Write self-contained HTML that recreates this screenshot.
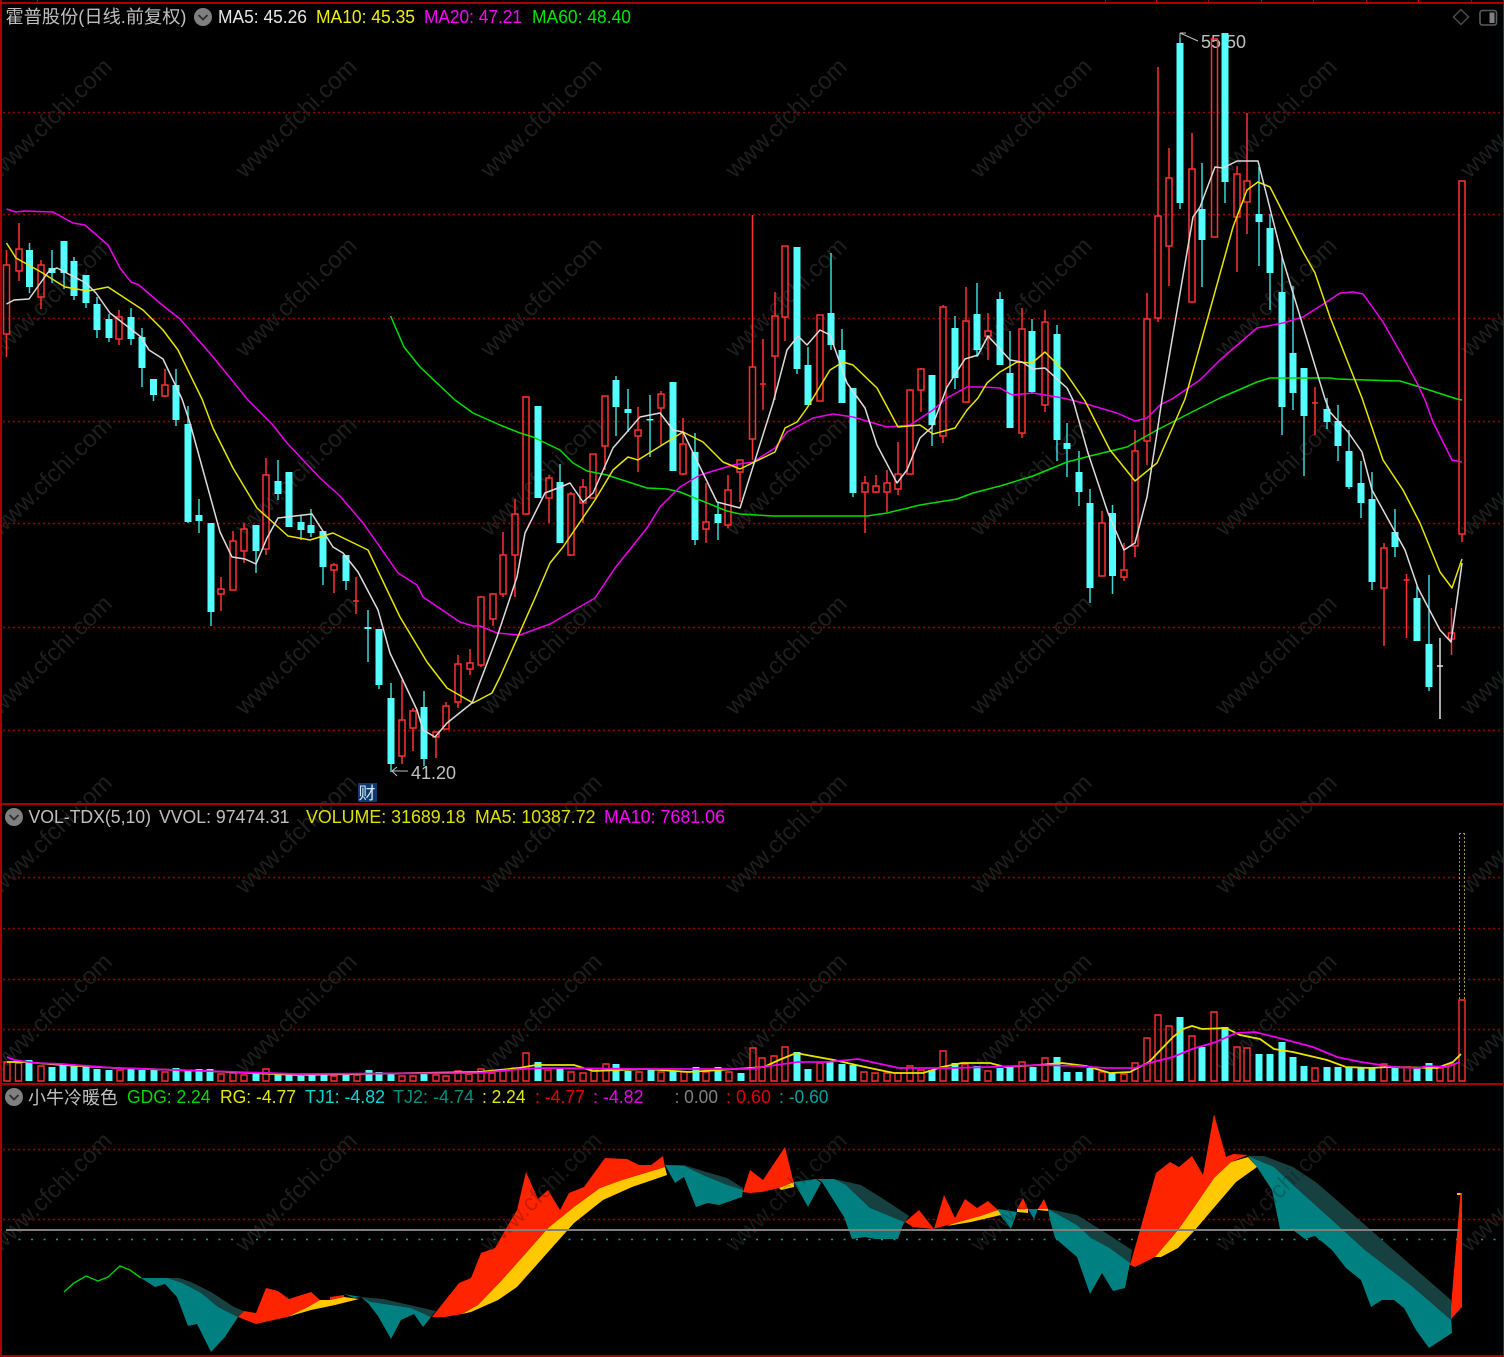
<!DOCTYPE html>
<html><head><meta charset="utf-8"><title>霍普股份</title>
<style>
html,body{margin:0;padding:0;background:#000;width:1504px;height:1357px;overflow:hidden}
svg{display:block}
text{font-family:"Liberation Sans","Noto Sans CJK SC",sans-serif;font-size:18.500px}
.wm text{font-size:24px;text-anchor:middle}
</style></head><body>
<svg width="1504" height="1357" viewBox="0 0 1504 1357" xmlns="http://www.w3.org/2000/svg">
<rect width="1504" height="1357" fill="#000"/>
<!-- grid -->
<g stroke="#960000" stroke-width="1.500" stroke-dasharray="2 3" fill="none">
<path d="M3 112.500H1503M3 214.500H1503M3 318.500H1503M3 421.500H1503M3 523.500H1503M3 627.500H1503M3 730.500H1503"/>
<path d="M3 877.500H1503M3 928.500H1503M3 979.500H1503M3 1029.500H1503"/>
<path d="M3 1149.500H1503M3 1219.500H1503"/>
</g>
<path d="M6 1239.500H1503" stroke="#00a0a0" stroke-width="1.500" stroke-dasharray="2 10.500" fill="none"/>
<!-- watermark -->
<g class="wm" fill="#1e1e1e">
<text x="51" y="126" transform="rotate(-44.300 51 118)">www.cfchi.com</text><text x="296" y="126" transform="rotate(-44.300 296 118)">www.cfchi.com</text><text x="541" y="126" transform="rotate(-44.300 541 118)">www.cfchi.com</text><text x="786" y="126" transform="rotate(-44.300 786 118)">www.cfchi.com</text><text x="1031" y="126" transform="rotate(-44.300 1031 118)">www.cfchi.com</text><text x="1276" y="126" transform="rotate(-44.300 1276 118)">www.cfchi.com</text><text x="1521" y="126" transform="rotate(-44.300 1521 118)">www.cfchi.com</text>
<text x="51" y="305" transform="rotate(-44.300 51 297)">www.cfchi.com</text><text x="296" y="305" transform="rotate(-44.300 296 297)">www.cfchi.com</text><text x="541" y="305" transform="rotate(-44.300 541 297)">www.cfchi.com</text><text x="786" y="305" transform="rotate(-44.300 786 297)">www.cfchi.com</text><text x="1031" y="305" transform="rotate(-44.300 1031 297)">www.cfchi.com</text><text x="1276" y="305" transform="rotate(-44.300 1276 297)">www.cfchi.com</text><text x="1521" y="305" transform="rotate(-44.300 1521 297)">www.cfchi.com</text>
<text x="51" y="484" transform="rotate(-44.300 51 476)">www.cfchi.com</text><text x="296" y="484" transform="rotate(-44.300 296 476)">www.cfchi.com</text><text x="541" y="484" transform="rotate(-44.300 541 476)">www.cfchi.com</text><text x="786" y="484" transform="rotate(-44.300 786 476)">www.cfchi.com</text><text x="1031" y="484" transform="rotate(-44.300 1031 476)">www.cfchi.com</text><text x="1276" y="484" transform="rotate(-44.300 1276 476)">www.cfchi.com</text><text x="1521" y="484" transform="rotate(-44.300 1521 476)">www.cfchi.com</text>
<text x="51" y="663" transform="rotate(-44.300 51 655)">www.cfchi.com</text><text x="296" y="663" transform="rotate(-44.300 296 655)">www.cfchi.com</text><text x="541" y="663" transform="rotate(-44.300 541 655)">www.cfchi.com</text><text x="786" y="663" transform="rotate(-44.300 786 655)">www.cfchi.com</text><text x="1031" y="663" transform="rotate(-44.300 1031 655)">www.cfchi.com</text><text x="1276" y="663" transform="rotate(-44.300 1276 655)">www.cfchi.com</text><text x="1521" y="663" transform="rotate(-44.300 1521 655)">www.cfchi.com</text>
<text x="51" y="842" transform="rotate(-44.300 51 834)">www.cfchi.com</text><text x="296" y="842" transform="rotate(-44.300 296 834)">www.cfchi.com</text><text x="541" y="842" transform="rotate(-44.300 541 834)">www.cfchi.com</text><text x="786" y="842" transform="rotate(-44.300 786 834)">www.cfchi.com</text><text x="1031" y="842" transform="rotate(-44.300 1031 834)">www.cfchi.com</text><text x="1276" y="842" transform="rotate(-44.300 1276 834)">www.cfchi.com</text><text x="1521" y="842" transform="rotate(-44.300 1521 834)">www.cfchi.com</text>
<text x="51" y="1021" transform="rotate(-44.300 51 1013)">www.cfchi.com</text><text x="296" y="1021" transform="rotate(-44.300 296 1013)">www.cfchi.com</text><text x="541" y="1021" transform="rotate(-44.300 541 1013)">www.cfchi.com</text><text x="786" y="1021" transform="rotate(-44.300 786 1013)">www.cfchi.com</text><text x="1031" y="1021" transform="rotate(-44.300 1031 1013)">www.cfchi.com</text><text x="1276" y="1021" transform="rotate(-44.300 1276 1013)">www.cfchi.com</text><text x="1521" y="1021" transform="rotate(-44.300 1521 1013)">www.cfchi.com</text>
<text x="51" y="1200" transform="rotate(-44.300 51 1192)">www.cfchi.com</text><text x="296" y="1200" transform="rotate(-44.300 296 1192)">www.cfchi.com</text><text x="541" y="1200" transform="rotate(-44.300 541 1192)">www.cfchi.com</text><text x="786" y="1200" transform="rotate(-44.300 786 1192)">www.cfchi.com</text><text x="1031" y="1200" transform="rotate(-44.300 1031 1192)">www.cfchi.com</text><text x="1276" y="1200" transform="rotate(-44.300 1276 1192)">www.cfchi.com</text><text x="1521" y="1200" transform="rotate(-44.300 1521 1192)">www.cfchi.com</text>
</g>
<!-- high / low labels (below candles) -->
<text x="1201" y="48" textLength="45" lengthAdjust="spacingAndGlyphs" fill="#c0c0c0">55.50</text>
<path d="M1180 33L1198 41M1180 33h6M1180 33v8" stroke="#c0c0c0" fill="none"/>
<text x="411" y="779" textLength="45" lengthAdjust="spacingAndGlyphs" fill="#c0c0c0">41.20</text>
<path d="M392 771H408M392 771l5-4M392 771l5 5" stroke="#c0c0c0" fill="none"/>
<!-- cyan wicks -->
<path fill="none" stroke="#38d8d8" stroke-width="1.500" d="M29.500 243V293M52 250V283M64 241V289M74 257V300M86 275V308M97 297V338M109 314V342M131 308V345M142 328V387M153.500 379V401M176 369V426M188 406V523M199 499V533M211 523V626M256 525V573M278 460V500M289 472V527M301 515V540M311 509V537M323 531V585M346 555V590M368 610V662M379 629V689M391 683V772M424 691V766M538 406V498M560 464V543M616 376V436M628 389V432M650 395V457M673 382V471M695 433V545M718 502V540M797 247V374M808 347V405M831 253V350M842 329V403M853 388V497M932 375V446M955 316V389M977 283V357M1000 292V365M1010 331V428M1032 319V394M1057 325V461M1067 423V477M1079 451V506M1090 489V603M1112.500 505V594M1180 38V209M1202 163V287M1225 33V203M1259 167V266M1270 214V310M1282 257V435M1293 286V410M1304 368V476M1327 398V429M1338 405V461M1349 430V489M1361 461V518M1372 472V590M1395 509V557M1417 586V641M1429 575V691"/>
<!-- cyan bodies -->
<path fill="#54ffff" d="M26 250h7v37h-7zM48.500 268h7v5h-7zM60.500 241h7v32h-7zM70.500 261h7v35h-7zM82.500 275h7v28h-7zM93.500 304h7v26h-7zM105.500 319h7v19h-7zM127.500 317h7v22h-7zM138.500 337h7v31h-7zM150 379h7v16h-7zM172.500 385h7v35h-7zM184.500 424h7v98h-7zM195.500 515h7v6h-7zM207.500 523h7v89h-7zM252.500 525h7v26h-7zM274.500 481h7v13h-7zM285.500 472h7v55h-7zM297.500 522h7v8h-7zM307.500 525h7v8h-7zM319.500 531h7v36h-7zM342.500 555h7v26h-7zM364.500 627h7v2h-7zM375.500 629h7v56h-7zM387.500 698h7v66h-7zM420.500 707h7v52h-7zM534.500 406h7v92h-7zM556.500 482h7v61h-7zM612.500 380h7v27h-7zM624.500 409h7v4h-7zM646.500 419h7v1.500h-7zM669.500 382h7v89h-7zM691.500 452h7v88h-7zM714.500 514h7v9h-7zM793.500 247h7v122h-7zM804.500 365h7v40h-7zM827.500 313h7v32h-7zM838.500 350h7v53h-7zM849.500 388h7v105h-7zM928.500 375h7v50h-7zM951.500 328h7v50h-7zM973.500 314h7v36h-7zM996.500 299h7v66h-7zM1006.500 373h7v55h-7zM1028.500 331h7v61h-7zM1053.500 334h7v106h-7zM1063.500 443h7v6h-7zM1075.500 472h7v20h-7zM1086.500 503h7v85h-7zM1109 513h7v63h-7zM1176.500 43h7v160h-7zM1198.500 209h7v31h-7zM1221.500 33h7v149h-7zM1255.500 214h7v8h-7zM1266.500 228h7v45h-7zM1278.500 292h7v115h-7zM1289.500 353h7v40h-7zM1300.500 368h7v48h-7zM1323.500 409h7v13h-7zM1334.500 421h7v25h-7zM1345.500 451h7v36h-7zM1357.500 483h7v20h-7zM1368.500 499h7v83h-7zM1391.500 532h7v15h-7zM1413.500 598h7v43h-7zM1425.500 644h7v43h-7z"/>
<!-- red candles -->
<path fill="none" stroke="#ff3030" stroke-width="1.500" d="M6.500 250V265M6.500 334V357M3.500 265h6v69h-6zM19 223V249M19 271V281M16 249h6v22h-6zM41 260V265M41 297V309M38 265h6v32h-6zM119 310V317M119 339V345M116 317h6v22h-6zM165 369V385M165 396V397M162 385h6v11h-6zM221 577V589M221 594V611M218 589h6v5h-6zM233 531V541M230 541h6v49h-6zM244 523V529M244 551V563M241 529h6v22h-6zM266 458V475M266 549V555M263 475h6v74h-6zM334 563V565M334 570V593M331 565h6v5h-6zM356 577V614M353 601h6M402 680V720M402 756V764M399 720h6v36h-6zM413 708V711M413 728V751M410 711h6v17h-6zM436 737V758M433 732h6v5h-6zM446 702V706M443 706h6v23h-6zM458 655V664M458 702V708M455 664h6v38h-6zM470 649V663M470 669V675M467 663h6v6h-6zM481 596V597M481 665V667M478 597h6v68h-6zM493 593V594M493 619V626M490 594h6v25h-6zM503 532V555M503 594V597M500 555h6v39h-6zM515 499V514M515 555V597M512 514h6v41h-6zM526 396V397M523 397h6v117h-6zM549 475V478M549 498V523M546 478h6v20h-6zM571 492V494M571 555V556M568 494h6v61h-6zM583 479V487M583 503V523M580 487h6v16h-6zM590 454h6v44h-6zM602 396h6v50h-6zM605 446V470M638 407V430M638 436V472M635 430h6v6h-6zM661 391V394M661 408V445M658 394h6v14h-6zM683 418V444M683 474V475M680 444h6v30h-6zM706 483V522M706 529V543M703 522h6v7h-6zM728 475V490M728 525V528M725 490h6v35h-6zM737 460h6v12h-6zM740 472V502M752.500 215V367M752.500 439V460M749.500 367h6v72h-6zM763 339V410M760 384h6M775 292V316M775 356V400M772 316h6v40h-6zM782 246h6v71h-6zM785 317V341M817 315h6v86h-6zM865 476V483M865 492V533M862 483h6v9h-6zM876 475V486M876 492V493M873 486h6v6h-6zM887 470V483M887 492V512M884 483h6v9h-6zM898 442V474M898 489V495M895 474h6v15h-6zM907 390h6v84h-6zM921 368V369M921 390V412M918 369h6v21h-6zM943 305V307M943 436V443M940 307h6v129h-6zM966 287V321M963 321h6v81h-6zM988 313V331M988 336V360M985 331h6v5h-6zM1022 308V329M1022 433V438M1019 329h6v104h-6zM1045 310V322M1045 405V412M1042 322h6v83h-6zM1102 511V523M1099 523h6v53h-6zM1124 543V570M1124 577V581M1121 570h6v7h-6zM1135 430V451M1135 546V557M1132 451h6v95h-6zM1147 293V319M1147 441V465M1144 319h6v122h-6zM1158 67V216M1158 318V322M1155 216h6v102h-6zM1169 148V178M1169 246V286M1166 178h6v68h-6zM1189 169h6v133h-6zM1192 133V169M1211.500 39h6v198h-6zM1237 166V174M1237 217V272M1234 174h6v43h-6zM1247 113V181M1247 202V234M1244 181h6v21h-6zM1315 387V435M1312 403h6M1384 543V548M1384 588V646M1381 548h6v40h-6zM1406.500 574V638M1403.500 580h6M1451.500 608V633M1451.500 639V655M1448.500 633h6v6h-6zM1459 181h6v353h-6zM1462 534V542"/>
<path d="M1440 638V719M1437 666h6" stroke="#e0e0e0" stroke-width="1.500" fill="none"/>
<!-- MA lines -->
<g fill="none" stroke-width="1.500" stroke-linejoin="round">
<polyline stroke="#00e000" points="390.600,316 404,347 420,367 455,400 473,413 500,425 520,433 533,437 560,450 573,463 587,471 607,475 647,488 667,489 680,492 727,511 740,514 773,516 817,516 867,516 887,513 920,505 957,499 973,493 1000,486 1033,476 1067,462 1090,456 1127,447 1157,430 1190,413 1220,398 1257,382 1270,378 1330,378 1337,379 1367,380 1400,381 1420,387 1457,399 1462,400"/>
<polyline stroke="#ee00ee" points="6.500,209 16,212 24.500,211 53,212 73,223 85,225 108,245 120,268 131,282 139,285 161,304 180,319 214,358 248,400 272,424 287,443 320,478 340,496 363,523 380,547 398,573 417,585 423,597 460,622 473,626 480,626 497,633 520,635 550,624 595,598 615,568 647,528 660,507 680,487 700,475 733,465 753,462 775,448 787,432 813,418 833,414 853,417 887,427 910,425 933,410 947,398 967,387 983,387 1000,388 1012,395 1033,393 1063,398 1083,403 1117,413 1135,421 1147,418 1160,405 1172,399 1200,380 1220,360 1257,328 1283,323 1303,317 1325,303 1340,293 1353,292 1363,294 1383,322 1403,357 1417,383 1425,400 1433,422 1452,460 1462,462"/>
<polyline stroke="#e6e600" points="6.500,243 16,258 41,272 65,287 88,291 108,287 143,310 163,330 178,350 202,399 213,428 233,468 257,508 288,536 310,540 333,533 368,550 400,617 427,662 447,688 473,703 492,693 500,677 535,598 550,563 563,547 595,500 613,470 628,457 638,460 683,432 703,442 723,462 740,469 775,452 785,428 797,422 807,408 830,370 843,362 853,365 877,388 898,427 920,425 933,434 955,428 967,410 978,398 987,383 1000,372 1017,362 1032,363 1045,352 1065,372 1085,401 1110,450 1135,481 1157,463 1185,399 1208,317 1233,227 1247,190 1258,182 1270,187 1302,250 1315,273 1330,317 1362,398 1383,460 1403,490 1420,523 1440,572 1452,588 1462,559"/>
<polyline stroke="#dcdcdc" points="6.500,304 14,300 29,299 49,271 57,268 86,283 96,293 110,313 141,337 149,350 163,359 182,399 190,423 220,532 232,557 245,559 256,564 267,538 278,518 312,514 333,547 343,553 358,572 378,610 390,653 417,710 423,730 435,737 447,723 472,703 497,637 510,598 517,577 525,533 545,493 563,486 570,483 583,502 593,493 613,448 640,417 660,413 673,430 683,432 700,467 717,502 740,508 773,403 787,350 798,336 807,345 820,330 830,335 847,383 865,408 877,445 897,483 907,470 920,438 932,427 947,387 965,359 978,355 988,336 1000,349 1010,360 1022,362 1033,369 1045,368 1067,388 1073,400 1088,453 1108,513 1124,550 1135,543 1147,497 1157,433 1162,399 1193,217 1200,207 1215,167 1223,168 1237,161 1258,161 1283,260 1293,293 1325,399 1330,412 1348,432 1362,452 1372,490 1405,550 1418,588 1440,630 1451,642 1457,600 1462,563"/>
</g>
<!-- 财 badge -->
<rect x="358" y="783" width="19" height="19" fill="#0c3a6c"/>
<text x="358.500" y="799" style="font-size:17px" fill="#d8e8f8">财</text>
<!-- volume bars -->
<path fill="none" stroke="#ff3030" stroke-width="1.400" d="M4 1062h6V1081h-6zM15.500 1063h6V1081h-6zM38 1066h6V1081h-6zM117 1070h6V1081h-6zM162 1072h6V1081h-6zM218 1074h6V1081h-6zM230 1073h6V1081h-6zM241 1075h6V1081h-6zM263 1069h6V1081h-6zM331 1076h6V1081h-6zM354 1075h6V1081h-6zM399 1076h6V1081h-6zM410 1076h6V1081h-6zM433 1075h6V1081h-6zM443 1076h6V1081h-6zM455 1071h6V1081h-6zM466 1074h6V1081h-6zM478 1069h6V1081h-6zM489 1073h6V1081h-6zM500 1071h6V1081h-6zM512 1068h6V1081h-6zM523 1053h6V1081h-6zM545 1070h6V1081h-6zM568 1072h6V1081h-6zM580 1073h6V1081h-6zM591 1069h6V1081h-6zM603 1064h6V1081h-6zM636 1072h6V1081h-6zM658 1072h6V1081h-6zM681 1072h6V1081h-6zM703 1072h6V1081h-6zM726 1072h6V1081h-6zM750 1048h6V1081h-6zM759 1058h6V1081h-6zM771 1056h6V1081h-6zM782 1047h6V1081h-6zM817 1063h6V1081h-6zM861 1072h6V1081h-6zM872 1073h6V1081h-6zM884 1073h6V1081h-6zM895 1073h6V1081h-6zM907 1066h6V1081h-6zM918 1070h6V1081h-6zM940 1051h6V1081h-6zM962 1064h6V1081h-6zM985 1071h6V1081h-6zM1019 1062h6V1081h-6zM1042 1058h6V1081h-6zM1099 1072h6V1081h-6zM1121 1074h6V1081h-6zM1132 1063h6V1081h-6zM1144 1038h6V1081h-6zM1155 1015h6V1081h-6zM1166 1026h6V1081h-6zM1189 1036h6V1081h-6zM1211 1012h6V1081h-6zM1234 1047h6V1081h-6zM1244 1048h6V1081h-6zM1312 1068h6V1081h-6zM1381 1064h6V1081h-6zM1404 1067h6V1081h-6zM1437 1068h6V1081h-6zM1448 1064h6V1081h-6zM1459 1000h6V1081h-6z"/>
<path fill="#54ffff" d="M25.500 1060h7V1081h-7zM48.500 1067h7V1081h-7zM59.500 1064h7V1081h-7zM70.500 1066h7V1081h-7zM82.500 1067h7V1081h-7zM93.500 1069h7V1081h-7zM105.500 1070h7V1081h-7zM127.500 1069h7V1081h-7zM138.500 1070h7V1081h-7zM150.500 1069h7V1081h-7zM172.500 1068h7V1081h-7zM184.500 1070h7V1081h-7zM195.500 1069h7V1081h-7zM206.500 1069h7V1081h-7zM252.500 1073h7V1081h-7zM274.500 1073h7V1081h-7zM285.500 1073h7V1081h-7zM297.500 1076h7V1081h-7zM308.500 1074h7V1081h-7zM320.500 1075h7V1081h-7zM342.500 1075h7V1081h-7zM365.500 1070h7V1081h-7zM375.500 1072h7V1081h-7zM387.500 1074h7V1081h-7zM420.500 1074h7V1081h-7zM534.500 1062h7V1081h-7zM556.500 1068h7V1081h-7zM612.500 1064h7V1081h-7zM624.500 1071h7V1081h-7zM647.500 1069h7V1081h-7zM669.500 1071h7V1081h-7zM692.500 1067h7V1081h-7zM714.500 1067h7V1081h-7zM737.500 1073h7V1081h-7zM793.500 1052h7V1081h-7zM804.500 1069h7V1081h-7zM826.500 1061h7V1081h-7zM838.500 1064h7V1081h-7zM849.500 1065h7V1081h-7zM928.500 1070h7V1081h-7zM951.500 1063h7V1081h-7zM973.500 1066h7V1081h-7zM996.500 1068h7V1081h-7zM1006.500 1067h7V1081h-7zM1029.500 1067h7V1081h-7zM1053.500 1057h7V1081h-7zM1063.500 1072h7V1081h-7zM1075.500 1072h7V1081h-7zM1086.500 1068h7V1081h-7zM1108.500 1073h7V1081h-7zM1176.500 1017h7V1081h-7zM1198.500 1047h7V1081h-7zM1221.500 1027h7V1081h-7zM1255.500 1054h7V1081h-7zM1266.500 1054h7V1081h-7zM1278.500 1042h7V1081h-7zM1289.500 1057h7V1081h-7zM1300.500 1066h7V1081h-7zM1323.500 1067h7V1081h-7zM1334.500 1067h7V1081h-7zM1345.500 1067h7V1081h-7zM1357.500 1068h7V1081h-7zM1368.500 1067h7V1081h-7zM1391.500 1067h7V1081h-7zM1413.500 1068h7V1081h-7zM1425.500 1063h7V1081h-7z"/>
<path d="M1459.500 833V1000M1464.500 833V1000M1459 833.500h6" fill="none" stroke="#a0a020" stroke-width="1" stroke-dasharray="2 2"/>
<g fill="none" stroke-width="1.800">
<polyline stroke="#e6e600" points="7,1062 24,1062 62,1065 115,1068 206,1071 297,1075 416,1073 478,1072 519,1068 536,1065 574,1065 593,1071 646,1069 689,1072 750,1068 764,1067 779,1060 796,1053 812,1056 834,1060 865,1067 894,1073 923,1073 942,1067 962,1063 990,1063 1005,1067 1038,1065 1062,1063 1086,1066 1110,1073 1130,1072 1149,1062 1173,1037 1183,1029 1192,1026 1202,1029 1226,1028 1240,1035 1260,1039 1274,1049 1293,1052 1327,1060 1346,1067 1370,1068 1389,1067 1437,1068 1453,1062 1461,1054"/>
<polyline stroke="#ee00ee" points="7,1057 14,1060 36,1063 62,1064 115,1068 206,1071 297,1074 478,1073 522,1069 545,1068 641,1069 713,1069 750,1069 769,1066 798,1062 827,1062 858,1059 885,1065 899,1068 952,1068 990,1067 1038,1065 1077,1066 1106,1068 1135,1068 1149,1063 1173,1057 1192,1049 1216,1042 1236,1033 1255,1032 1279,1038 1313,1047 1337,1057 1361,1062 1394,1067 1418,1068 1428,1066 1447,1067 1460,1062"/>
</g>
<!-- indicator pane -->
<polyline fill="none" stroke="#00d000" stroke-width="1.400" points="64,1292 74,1283 86,1276 98,1281 108,1277 120,1266 130,1270 141,1278"/>
<g fill="#174040">
<polygon points="141,1278 179,1278 191,1282 211,1292 234,1307 244,1311 238,1317 218,1307 167,1278"/>
<polygon points="361,1297 383,1299 436,1311 431,1317 411,1308 371,1302"/>
<polygon points="665,1165 684,1165 703,1171 727,1178 743,1188 743,1192 703,1175"/>
<polygon points="817,1179 834,1179 861,1185 885,1200 909,1216 904,1224 870,1208 846,1185"/>
<polygon points="1048,1209 1077,1215 1106,1233 1132,1250 1130,1265 1108,1247 1091,1238 1077,1225"/>
<polygon points="1248,1156 1264,1156 1293,1167 1317,1183 1365,1225 1413,1267 1451,1300 1452,1333 1451,1320 1413,1287 1365,1250 1332,1220 1293,1185 1274,1167 1257,1167"/>
</g>
<g fill="#008080">
<polygon points="141,1278 167,1278 182,1283 201,1293 218,1307 238,1317 225,1337 211,1352 197,1324 188,1326 177,1297 165,1284 155,1287"/>
<polygon points="344,1294 361,1297 354,1298"/>
<polygon points="361,1297 371,1302 411,1308 431,1317 423,1327 414,1314 401,1320 391,1339 378,1316 368,1303"/>
<polygon points="665,1165 684,1166 703,1175 727,1185 743,1190 742,1197 719,1205 708,1203 696,1207 684,1177 675,1183"/>
<polygon points="794,1182 816,1179 821,1183 808,1207"/>
<polygon points="817,1179 834,1179 846,1185 870,1208 904,1222 898,1239 875,1239 865,1237 852,1239 844,1217 822,1182"/>
<polygon points="998,1209 1017,1212 1011,1229 1000,1215"/>
<polygon points="1028,1209 1038,1209 1034,1219"/>
<polygon points="1048,1209 1077,1225 1091,1238 1108,1247 1130,1263 1125,1288 1113,1291 1102,1273 1090,1294 1077,1257 1055,1238 1050,1220"/>
<polygon points="1248,1156 1257,1160 1274,1167 1293,1185 1332,1220 1365,1250 1413,1287 1451,1320 1452,1333 1429,1348 1416,1330 1404,1308 1394,1300 1382,1300 1371,1307 1361,1280 1346,1268 1332,1250 1315,1236 1305,1239 1293,1230 1280,1229 1272,1190 1257,1167"/>
</g>
<g fill="#ffc800">
<polygon points="287,1317 306,1308 320,1300 330,1300 344,1297 359,1299 335,1305 311,1310"/>
<polygon points="462,1314 478,1305 502,1280 526,1253 548,1228 574,1207 600,1188 622,1180 665,1167 667,1175 632,1187 603,1200 574,1223 541,1260 517,1287 498,1300 471,1312"/>
<polygon points="779,1188 794,1182 794,1187 781,1190"/>
<polygon points="952,1224 998,1210 1001,1215 971,1222 947,1226"/>
<polygon points="1017,1209 1028,1209 1028,1213 1017,1212"/>
<polygon points="1038,1209 1048,1209 1048,1211 1038,1210"/>
<polygon points="1155,1257 1178,1230 1197,1203 1214,1178 1231,1162 1248,1157 1257,1167 1236,1182 1212,1210 1195,1230 1178,1248 1161,1257"/>
<rect x="1457" y="1193" width="5" height="2"/>
</g>
<g fill="#ff2400">
<polygon points="238,1317 244,1311 256,1313 266,1288 278,1291 289,1299 311,1292 320,1300 306,1308 287,1317 256,1324"/>
<polygon points="330,1297 344,1295 344,1297 330,1300"/>
<polygon points="432,1317 459,1283 471,1278 481,1253 495,1248 507,1227 517,1210 526,1172 538,1199 548,1190 560,1210 569,1193 584,1187 605,1158 627,1159 639,1165 651,1165 663,1156 665,1167 622,1180 600,1188 574,1207 548,1228 526,1253 502,1280 478,1305 462,1314 445,1317"/>
<polygon points="743,1192 750,1170 763,1180 785,1147 793,1180 794,1182 779,1188 762,1192 750,1193"/>
<polygon points="905,1222 919,1210 934,1229 944,1195 955,1218 965,1199 977,1208 988,1201 998,1210 981,1216 952,1224 933,1229 913,1227"/>
<polygon points="1023,1198 1028,1209 1017,1209"/>
<polygon points="1044,1199 1048,1209 1038,1209"/>
<polygon points="1130,1265 1140,1230 1156,1173 1170,1162 1179,1167 1192,1156 1203,1175 1214,1114 1226,1157 1233,1154 1248,1155 1231,1162 1214,1178 1197,1203 1178,1230 1155,1257 1135,1267"/>
<polygon points="1451,1320 1451,1307 1460.500,1193 1462,1193 1462,1307 1452,1318"/>
</g>
<g class="wm" fill="#000" fill-opacity=".2">
<text x="541" y="1200" transform="rotate(-44.300 541 1192)">www.cfchi.com</text><text x="786" y="1200" transform="rotate(-44.300 786 1192)">www.cfchi.com</text><text x="1031" y="1200" transform="rotate(-44.300 1031 1192)">www.cfchi.com</text><text x="1276" y="1200" transform="rotate(-44.300 1276 1192)">www.cfchi.com</text>
</g>
<path d="M6 1230H1460" stroke="#808080" stroke-width="2"/>
<!-- borders -->
<g fill="#a80000">
<rect x="0" y="2" width="1504" height="2"/>
<rect x="0" y="0" width="2" height="1357"/>
<rect x="1503" y="0" width="1" height="1357"/>
<rect x="0" y="803" width="1504" height="2"/>
<rect x="0" y="1083" width="1504" height="2"/>
<rect x="0" y="1355" width="1504" height="2"/>
<path d="M37 0h1v2h-1zM1105 0h1v2h-1zM1156 0h1v2h-1zM1208 0h1v2h-1zM1261 0h1v2h-1zM1313 0h1v2h-1zM1366 0h1v2h-1zM1418 0h1v2h-1zM1471 0h1v2h-1z"/>
</g>
<!-- icons -->
<g>
<circle cx="203" cy="17" r="9" fill="#808080"/><path d="M198.500 15l4.500 4.500 4.500-4.500" stroke="#2e2e2e" stroke-width="1.800" fill="none"/>
<circle cx="14" cy="817" r="9" fill="#808080"/><path d="M9.500 815l4.500 4.500 4.500-4.500" stroke="#2e2e2e" stroke-width="1.800" fill="none"/>
<circle cx="14" cy="1097" r="9" fill="#808080"/><path d="M9.500 1095l4.500 4.500 4.500-4.500" stroke="#2e2e2e" stroke-width="1.800" fill="none"/>
<path d="M1461 9.500l7.500 7.500-7.500 7.500-7.500-7.500z" fill="none" stroke="#4a4a4a" stroke-width="1.500"/>
<rect x="1480" y="10.500" width="16.500" height="14.500" rx="2.500" fill="none" stroke="#5a5a5a" stroke-width="1.600"/>
<rect x="1489.500" y="12.500" width="5" height="10.500" fill="#808080"/>
</g>
<!-- header text -->
<text x="5.500" y="23" textLength="181" lengthAdjust="spacingAndGlyphs" fill="#c0c0c0" style="font-size:18px">霍普股份(日线.前复权)</text>
<text x="218" y="23" textLength="89" lengthAdjust="spacingAndGlyphs" fill="#e8e8e8">MA5: 45.26</text>
<text x="316" y="23" textLength="99" lengthAdjust="spacingAndGlyphs" fill="#f0f000">MA10: 45.35</text>
<text x="424" y="23" textLength="98" lengthAdjust="spacingAndGlyphs" fill="#ff00ff">MA20: 47.21</text>
<text x="532" y="23" textLength="99" lengthAdjust="spacingAndGlyphs" fill="#00e800">MA60: 48.40</text>

<text x="28.500" y="823" textLength="122.500" lengthAdjust="spacingAndGlyphs" fill="#c0c0c0">VOL-TDX(5,10)</text>
<text x="159" y="823" textLength="130.500" lengthAdjust="spacingAndGlyphs" fill="#c0c0c0">VVOL: 97474.31</text>
<text x="306" y="823" textLength="159.500" lengthAdjust="spacingAndGlyphs" fill="#e0e000">VOLUME: 31689.18</text>
<text x="475" y="823" textLength="120.500" lengthAdjust="spacingAndGlyphs" fill="#e0e000">MA5: 10387.72</text>
<text x="604" y="823" textLength="121" lengthAdjust="spacingAndGlyphs" fill="#ff00ff">MA10: 7681.06</text>

<text x="28" y="1104" textLength="90" lengthAdjust="spacingAndGlyphs" fill="#c0c0c0" style="font-size:18px">小牛冷暖色</text>
<text x="127" y="1103" textLength="83.500" lengthAdjust="spacingAndGlyphs" fill="#00d800">GDG: 2.24</text>
<text x="220" y="1103" textLength="76" lengthAdjust="spacingAndGlyphs" fill="#e6e600">RG: -4.77</text>
<text x="305" y="1103" textLength="80" lengthAdjust="spacingAndGlyphs" fill="#00d8d8">TJ1: -4.82</text>
<text x="393" y="1103" textLength="81" lengthAdjust="spacingAndGlyphs" fill="#008f80">TJ2: -4.74</text>
<text x="482" y="1103" textLength="43.500" lengthAdjust="spacingAndGlyphs" fill="#e6e600">: 2.24</text>
<text x="535" y="1103" textLength="50" lengthAdjust="spacingAndGlyphs" fill="#e80000">: -4.77</text>
<text x="593" y="1103" textLength="50.500" lengthAdjust="spacingAndGlyphs" fill="#e800e8">: -4.82</text>
<text x="674.500" y="1103" textLength="43.500" lengthAdjust="spacingAndGlyphs" fill="#808080">: 0.00</text>
<text x="726" y="1103" textLength="45" lengthAdjust="spacingAndGlyphs" fill="#e00000">: 0.60</text>
<text x="779" y="1103" textLength="49.500" lengthAdjust="spacingAndGlyphs" fill="#00a0a0">: -0.60</text>
</svg>
</body></html>
